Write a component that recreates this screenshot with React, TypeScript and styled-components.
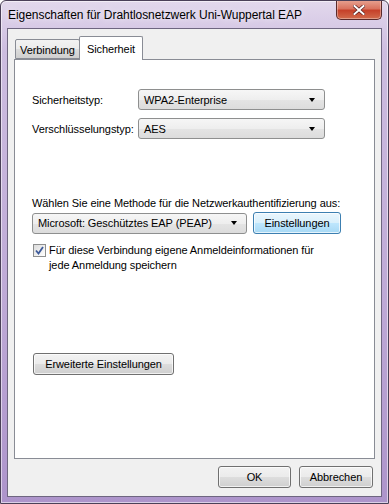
import React from "react";
import styled, { createGlobalStyle } from "styled-components";

const Global = createGlobalStyle`
  html, body { margin: 0; padding: 0; background: #ffffff; }
  body { font-family: "Liberation Sans", Arial, sans-serif; font-size: 11px; letter-spacing: -0.08px; color: #000; }
  * { box-sizing: border-box; }
`;

const Window = styled.div`
  width: 389px;
  height: 504px;
  display: flex;
  flex-direction: column;
  border: 1px solid #4a4058;
  border-radius: 6px 6px 0 0;
  background: linear-gradient(180deg, #e2d8ec 0%, #cdbde0 10%, #bea9d6 60%, #ad94cb 100%);
  box-shadow: inset 0 0 0 1px rgba(255,255,255,0.55);
  overflow: hidden;
`;

const TitleBar = styled.div`
  height: 27px;
  display: flex;
  align-items: center;
  padding-left: 7px;
  position: relative;
`;

const Title = styled.span`
  font-size: 12px;
  letter-spacing: -0.05px;
  color: #000;
  text-shadow: 0 0 6px rgba(255,255,255,0.9);
  margin-top: 1px;
`;

const CloseButton = styled.div`
  position: absolute;
  top: -1px;
  right: 6px;
  width: 46px;
  height: 20px;
  border: 1px solid #5a2a2a;
  border-top: none;
  border-radius: 0 0 5px 5px;
  background: linear-gradient(180deg, #e8a493 0%, #d9735f 45%, #c6412a 55%, #d26b4c 100%);
  box-shadow: inset 0 0 0 1px rgba(255,255,255,0.35);
  display: flex;
  align-items: center;
  justify-content: center;
`;

const Client = styled.div`
  flex: 1;
  margin: 0 6px 6px 6px;
  border: 1px solid #6e6680;
  background: #f0f0f0;
  display: flex;
  flex-direction: column;
  padding: 6px 6px 8px 6px;
`;

const TabStrip = styled.div`
  display: flex;
  align-items: flex-end;
  height: 24px;
  padding-left: 1px;
  position: relative;
  z-index: 1;
`;

const Tab = styled.div<{ $active?: boolean }>`
  height: ${(p) => (p.$active ? "24px" : "20px")};
  padding: 0 ${(p) => (p.$active ? "7px" : "4px")};
  display: flex;
  align-items: center;
  border: 1px solid #898c95;
  border-bottom: ${(p) => (p.$active ? "none" : "1px solid #898c95")};
  margin-left: ${(p) => (p.$active ? "-1px" : "0")};
  background: ${(p) =>
    p.$active ? "#ffffff" : "linear-gradient(180deg, #f2f2f2 0%, #ebebeb 50%, #dddddd 51%, #cfcfcf 100%)"};
  border-radius: 2px 2px 0 0;
  padding-top: ${(p) => (p.$active ? "0" : "2px")};
  margin-bottom: ${(p) => (p.$active ? "-1px" : "0")};
`;

const Panel = styled.div`
  flex: 1;
  background: #ffffff;
  border: 1px solid #898c95;
  padding: 29px 0 0 17px;
  display: flex;
  flex-direction: column;
`;

const FieldRow = styled.div`
  display: flex;
  align-items: center;
  height: 21px;
  margin-bottom: 8px;
`;

const Label = styled.span<{ $width?: number }>`
  width: ${(p) => (p.$width ? `${p.$width}px` : "auto")};
  flex-shrink: 0;
`;

const Combo = styled.div<{ $width: number }>`
  width: ${(p) => p.$width}px;
  height: 21px;
  border: 1px solid #8e8f8f;
  border-radius: 3px;
  background: linear-gradient(180deg, #f6f6f6 0%, #eeeeee 50%, #e4e4e4 51%, #dcdcdc 100%);
  display: flex;
  align-items: center;
  justify-content: space-between;
  padding: 0 9px 0 5px;
`;

const Arrow = styled.span`
  width: 0;
  height: 0;
  border-left: 3.5px solid transparent;
  border-right: 3.5px solid transparent;
  border-top: 4px solid #000;
`;

const MethodLabel = styled.div`
  margin-top: 48px;
  height: 16px;
  line-height: 16px;
`;

const MethodRow = styled.div`
  display: flex;
  align-items: center;
  gap: 6px;
  margin-top: 1px;
`;

const Button = styled.div<{ $width: number; $focus?: boolean }>`
  width: ${(p) => p.$width}px;
  height: 22px;
  border: 1px solid ${(p) => (p.$focus ? "#3c7fb1" : "#707070")};
  border-radius: 3px;
  background: ${(p) =>
    p.$focus
      ? "linear-gradient(180deg, #eaf6fd 0%, #d9f0fc 50%, #bee6fd 51%, #a7d9f5 100%)"
      : "linear-gradient(180deg, #f2f2f2 0%, #ebebeb 50%, #dddddd 51%, #cfcfcf 100%)"};
  box-shadow: inset 0 0 0 1px rgba(255,255,255,0.7);
  display: flex;
  align-items: center;
  justify-content: center;
`;

const CheckRow = styled.div`
  display: flex;
  align-items: flex-start;
  margin-top: 9px;
  margin-left: 1px;
  gap: 3px;
`;

const CheckBox = styled.div`
  width: 13px;
  height: 13px;
  border: 1px solid #8e8f8f;
  background: linear-gradient(135deg, #dcdcdc 0%, #ffffff 100%);
  display: flex;
  align-items: center;
  justify-content: center;
  margin-top: 1px;
  flex-shrink: 0;
`;

const CheckText = styled.div`
  line-height: 15px;
`;

const AdvancedWrap = styled.div`
  margin-top: 80px;
  margin-left: 1px;
`;

const Footer = styled.div`
  display: flex;
  justify-content: flex-end;
  gap: 8px;
  margin-top: 7px;
  padding-right: 2px;
`;

export default function App() {
  return (
    <>
      <Global />
      <Window>
        <TitleBar>
          <Title>Eigenschaften für Drahtlosnetzwerk Uni-Wuppertal EAP</Title>
          <CloseButton>
            <svg width="12" height="10" viewBox="0 0 12 10">
              <path d="M1.5 1 L10.5 9 M10.5 1 L1.5 9" stroke="#5a2020" strokeWidth="3.4" strokeLinecap="square" />
              <path d="M1.5 1 L10.5 9 M10.5 1 L1.5 9" stroke="#ffffff" strokeWidth="2" strokeLinecap="square" />
            </svg>
          </CloseButton>
        </TitleBar>
        <Client>
          <TabStrip>
            <Tab>Verbindung</Tab>
            <Tab $active>Sicherheit</Tab>
          </TabStrip>
          <Panel>
            <FieldRow>
              <Label $width={106}>Sicherheitstyp:</Label>
              <Combo $width={187}>
                <span>WPA2-Enterprise</span>
                <Arrow />
              </Combo>
            </FieldRow>
            <FieldRow>
              <Label $width={106}>Verschlüsselungstyp:</Label>
              <Combo $width={187}>
                <span>AES</span>
                <Arrow />
              </Combo>
            </FieldRow>
            <MethodLabel>Wählen Sie eine Methode für die Netzwerkauthentifizierung aus:</MethodLabel>
            <MethodRow>
              <Combo $width={215}>
                <span>Microsoft: Geschütztes EAP (PEAP)</span>
                <Arrow />
              </Combo>
              <Button $width={88} $focus>Einstellungen</Button>
            </MethodRow>
            <CheckRow>
              <CheckBox>
                <svg width="9" height="9" viewBox="0 0 9 9">
                  <path d="M1 4.5 L3.5 7.5 L8 1" stroke="#3d5a9a" strokeWidth="1.8" fill="none" />
                </svg>
              </CheckBox>
              <CheckText>
                Für diese Verbindung eigene Anmeldeinformationen für
                <br />
                jede Anmeldung speichern
              </CheckText>
            </CheckRow>
            <AdvancedWrap>
              <Button $width={141}>Erweiterte Einstellungen</Button>
            </AdvancedWrap>
          </Panel>
          <Footer>
            <Button $width={73}>OK</Button>
            <Button $width={74}>Abbrechen</Button>
          </Footer>
        </Client>
      </Window>
    </>
  );
}
